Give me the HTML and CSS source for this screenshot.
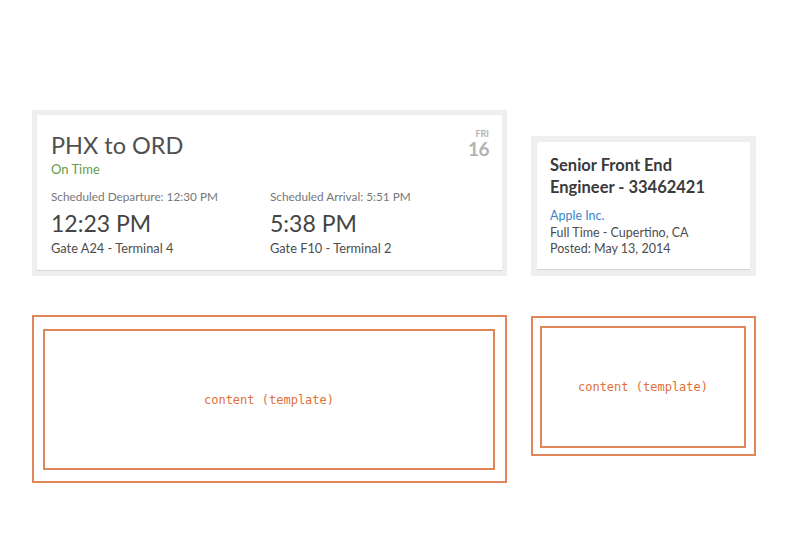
FILE: index.html
```html
<!DOCTYPE html>
<html>
<head>
<meta charset="utf-8">
<link rel="stylesheet" href="styles.css">
</head>
<body>
<div class="page">
  <div class="row row-top">
    <div class="frame frame-flight">
      <div class="card flight">
        <div class="flight-head">
          <div>
            <div class="route">PHX to ORD</div>
            <div class="status">On Time</div>
          </div>
          <div class="date">
            <div class="dow">FRI</div>
            <div class="day">16</div>
          </div>
        </div>
        <div class="legs">
          <div class="leg">
            <div class="sched">Scheduled Departure: 12:30 PM</div>
            <div class="time">12:23 PM</div>
            <div class="gate">Gate A24 - Terminal 4</div>
          </div>
          <div class="leg">
            <div class="sched">Scheduled Arrival: 5:51 PM</div>
            <div class="time">5:38 PM</div>
            <div class="gate">Gate F10 - Terminal 2</div>
          </div>
        </div>
      </div>
    </div>
    <div class="frame frame-job">
      <div class="card job">
        <div class="job-title">Senior Front End Engineer - 33462421</div>
        <div class="company">Apple Inc.</div>
        <div class="job-line">Full Time - Cupertino, CA</div>
        <div class="job-line">Posted: May 13, 2014</div>
      </div>
    </div>
  </div>
  <div class="row row-bottom">
    <div class="tpl tpl-left">
      <div class="tpl-inner">content (template)</div>
    </div>
    <div class="tpl tpl-right">
      <div class="tpl-inner">content (template)</div>
    </div>
  </div>
</div>
</body>
</html>
```

FILE: styles.css
```css
* { box-sizing: border-box; }
html, body { margin: 0; padding: 0; background: #fff; }
body { font-family: Lato, "Open Sans", sans-serif; color: #555; }

.page { padding: 110px 0 0 32px; }

.row { display: flex; gap: 24px; }
.row-top { align-items: flex-end; }
.row-bottom { margin-top: 39px; align-items: flex-start; }

.frame { background: #efefef; padding: 5px; }
.frame-flight { width: 475px; height: 166px; }
.frame-job { width: 225px; height: 140px; padding: 6px; }

.card {
  background: #fff;
  height: 100%;
  border-bottom: 1px solid #d6d6d6;
  box-shadow: 0 0 1px rgba(0,0,0,0.06);
}

.flight { padding: 16px 13px 0 14px; }
.flight-head { display: flex; justify-content: space-between; }
.route { font-size: 23.5px; line-height: 28px; color: #505050; }
.status { font-size: 13px; line-height: 18px; color: #5fa046; margin-top: 1px; }
.date { text-align: right; color: #b3b3b3; font-weight: 700; margin-top: -3px; }
.dow { font-size: 9px; line-height: 11px; }
.day { font-size: 19px; line-height: 19px; letter-spacing: -0.5px; }

.legs { display: flex; margin-top: 12px; }
.leg { width: 219px; }
.sched { font-size: 11.8px; line-height: 14px; color: #777; white-space: nowrap; }
.time { font-size: 23px; line-height: 30px; color: #444; margin-top: 4px; }
.gate { font-size: 12.8px; line-height: 16px; color: #4d4d4d; margin-top: 2px; }

.job { padding: 12px 13px 0 13px; }
.job-title { font-size: 16.5px; font-weight: 700; line-height: 22px; color: #3a3a3a; padding-right: 6px; }
.company { font-size: 12.5px; line-height: 16.5px; color: #3a86c8; margin-top: 10px; }
.job-line { font-size: 12.5px; line-height: 16.5px; color: #4d4d4d; }

.tpl { border: 2px solid #e08658; display: flex; }
.tpl-left { width: 475px; height: 168px; padding: 12px 10px 11px 9px; }
.tpl-right { width: 225px; height: 140px; padding: 8px 8px 6px 7px; margin-top: 1px; }
.tpl-inner {
  border: 2px solid #e08658;
  flex: 1;
  display: flex;
  align-items: center;
  justify-content: center;
  font-family: "DejaVu Sans Mono", monospace;
  font-size: 12px;
  color: #e0703a;
}
```
